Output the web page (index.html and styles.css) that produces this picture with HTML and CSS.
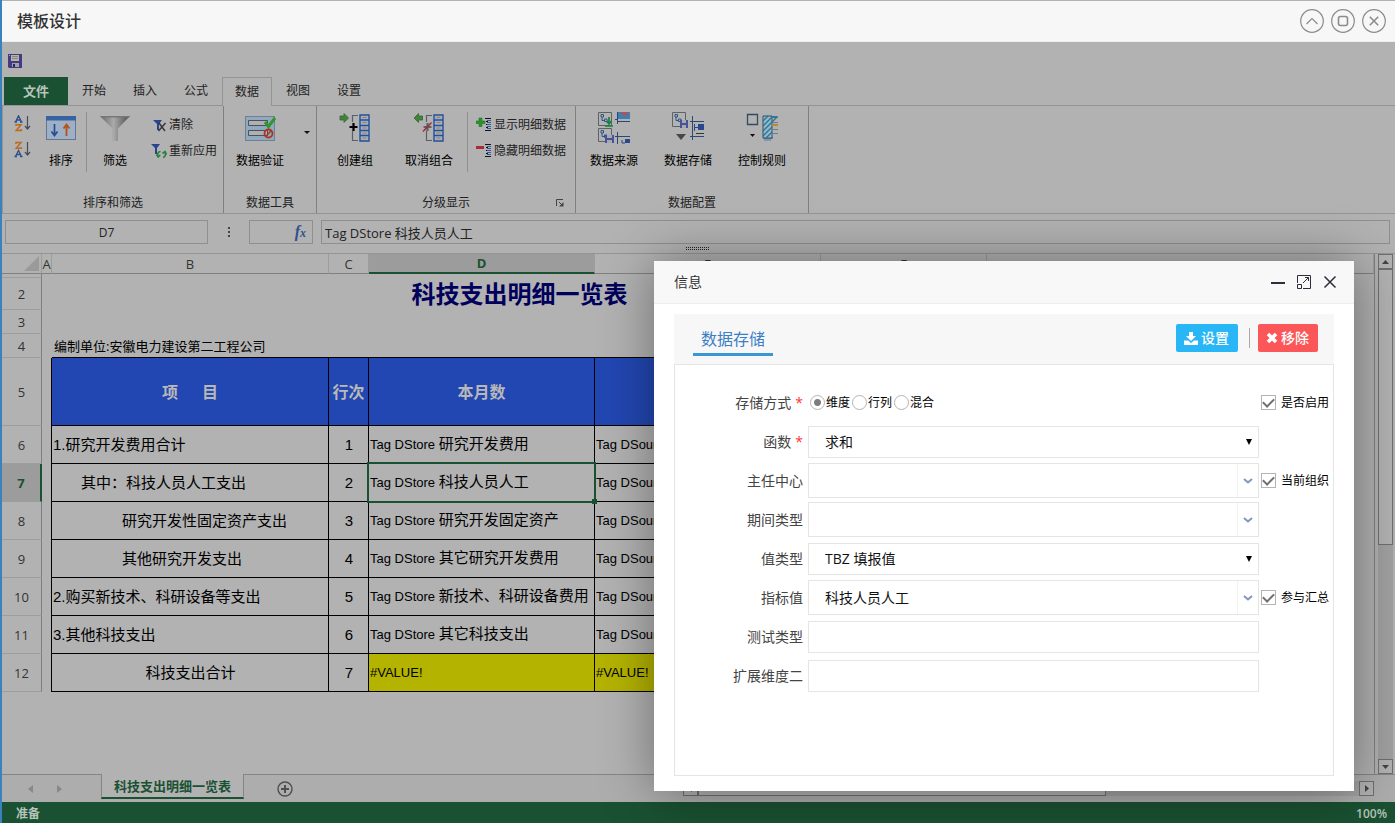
FILE: index.html
```html
<!DOCTYPE html>
<html lang="zh-CN">
<head>
    <meta charset="UTF-8">
    <meta name="viewport" content="width=device-width, initial-scale=1.0">
    <title>模板设计</title>
    <link rel="stylesheet" href="styles.css">
</head>
<body>
    <header class="window-header">
        <h1>模板设计</h1>
        <div class="window-tools">
            <button type="button" aria-label="收起"><svg width="24" height="24" viewBox="0 0 24 24"><circle cx="12" cy="12" r="11.3"/><path d="M6.5 15 12 9.5l5.500 5.500"/></svg></button>
            <button type="button" aria-label="最大化"><svg width="24" height="24" viewBox="0 0 24 24"><circle cx="12" cy="12" r="11.3"/><rect x="7.500" y="7.500" width="9" height="9" rx="2" stroke-width="1.600"/></svg></button>
            <button type="button" aria-label="关闭"><svg width="24" height="24" viewBox="0 0 24 24"><circle cx="12" cy="12" r="11.3"/><path d="m7.800 7.800 8.400 8.400m0-8.400-8.400 8.400" stroke-width="1.600"/></svg></button>
        </div>
    </header>

    <div class="quick-bar">
        <button type="button" aria-label="保存">
            <svg width="14" height="14" viewBox="0 0 14 14"><path d="M0 0h14v14H1l-1-1z" fill="#463a80"/><path d="M1 1h1v1H1z" fill="#aaa"/><path d="M3 1h8v6H3z" fill="#b5b5ad"/><path d="M4 2.500h6M4 4.500h6" stroke="#85857e"/><path d="M4 9h7v4H4z" fill="#9ba4ad"/><path d="M5 10h2v3H5z" fill="#262c4a"/></svg>
        </button>
    </div>

    <nav class="tabs">
        <button type="button" class="tab file">文件</button>
        <button type="button" class="tab">开始</button>
        <button type="button" class="tab">插入</button>
        <button type="button" class="tab">公式</button>
        <button type="button" class="tab active">数据</button>
        <button type="button" class="tab">视图</button>
        <button type="button" class="tab">设置</button>
    </nav>

    <section class="ribbon">
        <div class="group group-sort">
            <div class="group-body">
                <div class="mini-list">
                    <button type="button" aria-label="升序"><svg width="18" height="18" viewBox="0 0 18 18" fill="none"><path d="M2.500 7 5.500.8 8.500 7M3.500 5h4M1.500 7h2.500M7 7h2.500" stroke="#2d4d8e" stroke-width="1.300"/><path d="M3 11V9.700h5L3.200 15.500H8.300V14" stroke="#bd6a1d" stroke-width="1.500"/><path d="M14.500 1v12M12 11l2.500 3 2.500-3" stroke="#444c58" stroke-width="1.200"/></svg></button>
                    <button type="button" aria-label="降序"><svg width="18" height="18" viewBox="0 0 18 18" fill="none"><path d="M3 3V1.500h5L3.200 7.200H8.300V6" stroke="#bd6a1d" stroke-width="1.500"/><path d="m2.500 15.500 3-6 3 6M3.500 13.500h4M1.500 15.500h2.500M7 15.500h2.500" stroke="#2d4d8e" stroke-width="1.300"/><path d="M14.500 1v12M12 11l2.500 3 2.500-3" stroke="#444c58" stroke-width="1.200"/></svg></button>
                </div>
                <button type="button" class="big">
                    <svg width="32" height="32" viewBox="0 0 32 32"><rect x="1.500" y="4.500" width="29" height="23" fill="#9db0c5" stroke="#62768f"/><path d="M1 4h30v4.500H1z" fill="#3963a0"/><path d="M9.500 12v10M6.500 19.500l3 4 3-4" fill="none" stroke="#284b91" stroke-width="1.700"/><path d="M21.500 24V13.500m-3 3 3-4 3 4" fill="none" stroke="#bb521b" stroke-width="1.900"/></svg>
                    <span>排序</span>
                </button>
                <i class="divider"></i>
                <button type="button" class="big">
                    <svg width="32" height="32" viewBox="0 0 32 32"><defs><linearGradient id="cone"><stop offset="0" stop-color="#666"/><stop offset=".45" stop-color="#aaa"/><stop offset="1" stop-color="#4c4c4c"/></linearGradient></defs><path d="M1 4h30L19 16.500V29h-5.500V16.500z" fill="url(#cone)"/><path d="M1 4h30l-1 1.500H2.500z" fill="#777"/></svg>
                    <span>筛选</span>
                </button>
                <div class="small-list">
                    <button type="button" class="small"><svg width="16" height="16" viewBox="0 0 16 16"><path d="M2 3h9L8 7v6H6V7z" fill="#27458d"/><path d="m8 6 6 8m.5-8L7.500 14" stroke="#353535" stroke-width="1.400"/></svg>清除</button>
                    <button type="button" class="small"><svg width="16" height="16" viewBox="0 0 16 16"><path d="M0 1h9L6 5v6H4V5z" fill="#27458d"/><path d="M9.500 8.500A3 3 0 0 0 7 13M5.500 11.500l1.700 2.500 2-2M12 14.500A3 3 0 0 0 14 10M11.500 10.500 14 8.500l1.500 3" fill="none" stroke="#28833a" stroke-width="1.700"/></svg>重新应用</button>
                </div>
            </div>
            <div class="group-title">排序和筛选</div>
        </div>

        <div class="group group-tools">
            <div class="group-body">
                <button type="button" class="big">
                    <svg width="32" height="32" viewBox="0 0 32 32"><rect x="1.500" y="4.500" width="29" height="24" fill="#91a8bd" stroke="#6c8194"/><path d="M4.500 8.500h19v5h-19zM4.500 18.500h19v5h-19z" fill="#adb1b5" stroke="#4a5158"/><path d="m21 10 3.500 4.500L31 6" fill="none" stroke="#2f982c" stroke-width="3"/><circle cx="24.500" cy="21.500" r="4" fill="none" stroke="#a83520" stroke-width="1.800"/><path d="m22 24 5-5" stroke="#a83520" stroke-width="1.500"/></svg>
                    <span>数据验证</span>
                </button>
                <i class="caret"></i>
            </div>
            <div class="group-title">数据工具</div>
        </div>

        <div class="group group-outline">
            <div class="group-body">
                <div class="big-list">
                    <button type="button" class="big">
                        <svg width="32" height="32" viewBox="0 0 32 32"><path d="M1 4h4V1.500L9.500 6 5 10.500V8H1z" fill="#43843b" stroke="#386532" stroke-width=".8"/><path d="M19 3.500h-5.500V10M13.500 19v9.500H19" fill="none" stroke="#59606a" stroke-width="1.200"/><path d="M14.500 11v8M10.500 15h8" stroke="#000" stroke-width="2.200"/><path d="M21 3h9v26h-9z" fill="#9eb0c7" stroke="#284f96" stroke-width="1.400"/><path d="M21 8h9M21 13.500h9M21 18.500h9M21 23.500h9" stroke="#284f96" stroke-width="1.300"/><path d="M23.500 5.500h4M23.500 10.500h4M23.500 16h4M23.500 21h4M23.500 26h4" stroke="#b87a31"/></svg>
                        <span>创建组</span>
                    </button>
                    <button type="button" class="big">
                        <svg width="32" height="32" viewBox="0 0 32 32"><path d="M9.500 4H5.500V1.500L1 6l4.500 4.500V8h4z" fill="#43843b" stroke="#386532" stroke-width=".8"/><path d="M19 3.500h-5.500V10M13.500 19v9.500H19" fill="none" stroke="#59606a" stroke-width="1.200"/><path d="M14.500 11v8M10.500 15h8" stroke="#5f6266" stroke-width="2.200"/><path d="m10 19.500 8.500-9" stroke="#a72632" stroke-width="1.400"/><path d="M21 3h9v26h-9z" fill="#9eb0c7" stroke="#284f96" stroke-width="1.400"/><path d="M21 8h9M21 13.500h9M21 18.500h9M21 23.500h9" stroke="#284f96" stroke-width="1.300"/><path d="M23.500 5.500h4M23.500 10.500h4M23.500 16h4M23.500 21h4M23.500 26h4" stroke="#b87a31"/></svg>
                        <span>取消组合</span>
                    </button>
                </div>
                <i class="divider"></i>
                <div class="small-list">
                    <button type="button" class="small"><svg width="16" height="16" viewBox="0 0 16 16"><path d="M3 1h3v3h3v2.500H6v3H3v-3H0V4h3z" fill="#29942b" stroke="#23721e" stroke-width=".6"/><path d="M9 1.500h6M9 13.500h6M10 4.500h2M10 7.500h2M10 10.500h2" stroke="#111"/><path d="M11 3.500h4M11 5.500h4M11 7.500h4M11 9.500h4M11 11.500h4" stroke="#3458a2"/></svg>显示明细数据</button>
                    <button type="button" class="small"><svg width="16" height="16" viewBox="0 0 16 16"><path d="M0 3h8v3H0z" fill="#a52d35"/><path d="M9 1.500h6M9 13.500h6M10 4.500h2M10 7.500h2M10 10.500h2" stroke="#111"/><path d="M11 3.500h4M11 5.500h4M11 7.500h4M11 9.500h4M11 11.500h4" stroke="#3458a2"/></svg>隐藏明细数据</button>
                </div>
            </div>
            <div class="group-title">分级显示
                <button type="button" class="launcher" aria-label="更多"><svg width="8" height="8" viewBox="0 0 8 8"><path d="M.5 7V.5H7M3 3l3 3" fill="none" stroke="#444"/><path d="M7.500 3v4.500H3z" fill="#444"/></svg></button>
            </div>
        </div>

        <div class="group group-config">
            <div class="group-body">
                <div class="big-list">
                    <button type="button" class="big">
                        <svg width="32" height="32" viewBox="0 0 32 32" fill="none"><path d="M.5.500h13v13H.5zM.5 16.500h13v13H.5z" stroke="#5d6267"/><path d="M3 2.500h2.500V5H3zM6.500 7H9v2.500H6.500zM4 5v3.500h2.500M3 18.500h2.500V21H3zM6.500 23H9v2.500H6.500zM4 21v3.500h2.500" stroke="#2b5786"/><path d="M11 5v6M8.500 9l2.500 3 2.500-3M7 14h8" stroke="#15803b" stroke-width="1.700"/><path d="M7 23h9v8H7z" fill="#4a5296"/><path d="M9 23h5v3H9zM9 28h5v3H9z" fill="#a4a9b3"/><path d="M19.500 0v12M17 7.500h3M20 9.500h12" stroke="#2c4775"/><path d="M20 0h12v7H20z" fill="#437cad"/><path d="m22 0 5 4 4-4z" fill="#b25157"/><path d="M19.500 20v12M17 24.500h15M24 28v3h3" stroke="#2c4775"/><path d="M27 27h5v4h-5z" fill="#284791"/></svg>
                        <span>数据来源</span>
                    </button>
                    <button type="button" class="big">
                        <svg width="32" height="32" viewBox="0 0 32 32" fill="none"><path d="M.5.500h13v14H.5z" stroke="#5d6267"/><path d="M3 2.500h2.500V5H3zM6.500 7H9v2.500H6.500zM4 5v3.500h2.500" stroke="#2b5786"/><path d="M8 8h8v8H8z" fill="#4a5296"/><path d="M10 8h4v3h-4zM10 13h4v3h-4z" fill="#a4a9b3"/><path d="M4 22h10l-5 6z" fill="#484848"/><path d="M20.500 4v24M18 9.500h14M18 24.500h14M22 15.500h5M22.500 12v7" stroke="#2c4775"/><path d="M26 12h6v6h-6z" fill="#284791"/><path d="M24 21.500h8" stroke="#333"/></svg>
                        <span>数据存储</span>
                    </button>
                    <button type="button" class="big">
                        <svg width="32" height="32" viewBox="0 0 32 32" fill="none"><path d="M1.500 2.500h10v10h-10z" stroke="#334a61" stroke-width="1.300"/><path d="M4 22h5l-2.500 3z" fill="#111"/><path d="M17 5h15M17 26h10" stroke="#315069"/><path d="M17 4h9v22h-9z" fill="#9bb7c3" stroke="#315069"/><path d="m17 9 5-5m-5 10 9-9m-9 14 9-9m-9 14 9-9m-6 11 6-6M26 5h5m-5 5 5-5" stroke="#21779d" stroke-width="1.300"/><path d="M26 10.500h6M26 17.500h6M26 21.500h6" stroke="#6c7b91"/><path d="M26 13h6" stroke="#bd8730" stroke-width="2"/><path d="M18 27h7v2h-7z" fill="#8198b0"/></svg>
                        <span>控制规则</span>
                    </button>
                </div>
            </div>
            <div class="group-title">数据配置</div>
        </div>
    </section>

    <section class="formula">
        <div class="formula-row">
            <input type="text" class="name-box" aria-label="名称框" value="D7">
            <span class="dots"><i></i><i></i><i></i></span>
            <button type="button" class="fx" aria-label="插入函数"><em>f<small>x</small></em></button>
            <input type="text" class="formula-box" aria-label="编辑栏" value="Tag DStore 科技人员人工">
        </div>
        <div class="grip"><i></i><i></i></div>
    </section>

    <main class="sheet">
        <div class="grid">
            <table>
                <colgroup>
                    <col class="col-head"><col class="col-a"><col class="col-b"><col class="col-c"><col class="col-d"><col class="col-d"><col class="col-f"><col>
                </colgroup>
                <thead>
                    <tr>
                        <th class="corner"><svg width="15" height="15" viewBox="0 0 15 15"><path d="M15 0v15H0z" fill="#9a9a9a"/></svg></th>
                        <th>A</th><th>B</th><th>C</th><th class="current">D</th><th>E</th><th>F</th><th></th>
                    </tr>
                </thead>
                <tbody>
                    <tr class="row-1"><th></th><td colspan="7"></td></tr>
                    <tr class="row-2"><th>2</th><td></td><td colspan="5" class="title">科技支出明细一览表</td><td></td></tr>
                    <tr class="row-3"><th>3</th><td colspan="7"></td></tr>
                    <tr class="row-3 row-unit"><th>4</th><td></td><td class="unit">编制单位:安徽电力建设第二工程公司</td><td></td><td></td><td></td><td></td><td></td></tr>
                    <tr class="row-5"><th>5</th><td class="edge"></td><td>项&emsp;&ensp;目</td><td>行次</td><td>本月数</td><td></td><td></td><td class="out"></td></tr>
                    <tr class="data"><th>6</th><td class="edge"></td><td>1.研究开发费用合计</td><td>1</td><td><span>Tag DStore </span>研究开发费用</td><td><span>Tag DSource</span></td><td></td><td class="out"></td></tr>
                    <tr class="data"><th class="current">7</th><td class="edge"></td><td class="in-1">其中：科技人员人工支出</td><td>2</td><td class="selected"><span>Tag DStore </span>科技人员人工</td><td><span>Tag DSource</span></td><td></td><td class="out"></td></tr>
                    <tr class="data"><th>8</th><td class="edge"></td><td class="in-2">研究开发性固定资产支出</td><td>3</td><td><span>Tag DStore </span>研究开发固定资产</td><td><span>Tag DSource</span></td><td></td><td class="out"></td></tr>
                    <tr class="data"><th>9</th><td class="edge"></td><td class="in-2">其他研究开发支出</td><td>4</td><td><span>Tag DStore </span>其它研究开发费用</td><td><span>Tag DSource</span></td><td></td><td class="out"></td></tr>
                    <tr class="data"><th>10</th><td class="edge"></td><td>2.购买新技术、科研设备等支出</td><td>5</td><td><span>Tag DStore </span>新技术、科研设备费用</td><td><span>Tag DSource</span></td><td></td><td class="out"></td></tr>
                    <tr class="data"><th>11</th><td class="edge"></td><td>3.其他科技支出</td><td>6</td><td><span>Tag DStore </span>其它科技支出</td><td><span>Tag DSource</span></td><td></td><td class="out"></td></tr>
                    <tr class="data total"><th>12</th><td class="edge"></td><td>科技支出合计</td><td>7</td><td class="sum"><span>#VALUE!</span></td><td class="sum"><span>#VALUE!</span></td><td></td><td class="out"></td></tr>
                </tbody>
            </table>
        </div>
        <div class="vscroll">
            <button type="button" aria-label="向上"><svg width="7" height="4" viewBox="0 0 7 4"><path d="M0 4 3.500 0 7 4z"/></svg></button>
            <div class="vthumb"></div>
            <button type="button" aria-label="向下"><svg width="7" height="4" viewBox="0 0 7 4"><path d="m0 0 3.500 4L7 0z"/></svg></button>
        </div>
    </main>

    <div class="sheet-bar">
        <div class="sheet-nav">
            <button type="button" aria-label="上一个"><svg width="5" height="8" viewBox="0 0 5 8"><path d="M5 0v8L0 4z"/></svg></button>
            <button type="button" aria-label="下一个"><svg width="5" height="8" viewBox="0 0 5 8"><path d="M0 0v8l5-4z"/></svg></button>
        </div>
        <button type="button" class="sheet-tab">科技支出明细一览表</button>
        <div class="sheet-rest">
            <button type="button" class="add" aria-label="新建"><svg width="16" height="16" viewBox="0 0 16 16" fill="none" stroke="#4f4f4f"><circle cx="8" cy="8" r="7" stroke-width="1.400"/><path d="M8 4v8M4 8h8" stroke-width="2"/></svg></button>
            <div class="hscroll">
                <button type="button" aria-label="向左"><svg width="4" height="7" viewBox="0 0 4 7"><path d="M4 0v7L0 3.500z"/></svg></button>
                <div class="hthumb"></div>
                <button type="button" aria-label="向右"><svg width="4" height="7" viewBox="0 0 4 7"><path d="M0 0v7l4-3.500z"/></svg></button>
            </div>
        </div>
    </div>

    <footer class="status"><span>准备</span><span>100%</span></footer>

    <section class="dialog" role="dialog" aria-labelledby="dialogTitle">
        <div class="dialog-header">
            <h2 id="dialogTitle">信息</h2>
            <div class="dialog-tools">
                <button type="button" aria-label="最小化"><svg width="14" height="14" viewBox="0 0 14 14"><path d="M0 7h14v2H0z" fill="#2e2d3c"/></svg></button>
                <button type="button" aria-label="放大"><svg width="14" height="14" viewBox="0 0 14 14" fill="none" stroke="#2e2d3c"><path d="M.5 8V.5h13v13H6M.5 9.500h4v4h-4zM6 8l5.500-5.500M8 2.500h3.500V6"/></svg></button>
                <button type="button" aria-label="关闭"><svg width="14" height="14" viewBox="0 0 14 14" fill="none" stroke="#2e2d3c" stroke-width="1.500"><path d="m1.500 1.500 11 11m0-11-11 11"/></svg></button>
            </div>
        </div>
        <div class="panel">
            <div class="panel-header">
                <h3>数据存储</h3>
                <div class="actions">
                    <button type="button" class="btn btn-set"><svg width="14" height="13" viewBox="0 0 14 13" fill="#fff"><path d="M5 0h4v4h3L7 9 2 4h3z"/><path d="M0 8.500h4L7 11l3-2.500h4V13H0z"/></svg>设置</button>
                    <i></i>
                    <button type="button" class="btn btn-remove"><svg width="12" height="12" viewBox="0 0 12 12"><path d="m2 2 8 8m0-8-8 8" stroke="#fff" stroke-width="3.600"/></svg>移除</button>
                </div>
            </div>
            <form class="panel-body">
                <div class="form-row">
                    <span class="caption required" id="modeCaption">存储方式</span>
                    <div class="radios" role="radiogroup" aria-labelledby="modeCaption">
                        <label><input type="radio" name="mode" checked>维度</label>
                        <label><input type="radio" name="mode">行列</label>
                        <label><input type="radio" name="mode">混合</label>
                    </div>
                    <label class="check"><input type="checkbox" checked>是否启用</label>
                </div>
                <div class="form-row">
                    <label class="caption required" for="func">函数</label>
                    <div class="select"><select id="func"><option>求和</option></select></div>
                </div>
                <div class="form-row">
                    <label class="caption" for="center">主任中心</label>
                    <div class="combo"><input type="text" id="center"><button type="button" aria-label="展开"><svg width="10" height="6" viewBox="0 0 10 6"><path d="m1 1 4 3.500L9 1"/></svg></button></div>
                    <label class="check"><input type="checkbox" checked>当前组织</label>
                </div>
                <div class="form-row">
                    <label class="caption" for="period">期间类型</label>
                    <div class="combo"><input type="text" id="period"><button type="button" aria-label="展开"><svg width="10" height="6" viewBox="0 0 10 6"><path d="m1 1 4 3.500L9 1"/></svg></button></div>
                </div>
                <div class="form-row">
                    <label class="caption" for="valueType">值类型</label>
                    <div class="select"><select id="valueType"><option>TBZ 填报值</option></select></div>
                </div>
                <div class="form-row">
                    <label class="caption" for="indicator">指标值</label>
                    <div class="combo"><input type="text" id="indicator" value="科技人员人工"><button type="button" aria-label="展开"><svg width="10" height="6" viewBox="0 0 10 6"><path d="m1 1 4 3.500L9 1"/></svg></button></div>
                    <label class="check"><input type="checkbox" checked>参与汇总</label>
                </div>
                <div class="form-row">
                    <label class="caption" for="testType">测试类型</label>
                    <input type="text" class="field" id="testType">
                </div>
                <div class="form-row">
                    <label class="caption" for="extra">扩展维度二</label>
                    <input type="text" class="field" id="extra">
                </div>
            </form>
        </div>
    </section>
</body>
</html>
```
FILE: styles.css
```css
* {
    box-sizing: border-box;
}
body {
    font-family: "Open Sans", "Noto Sans CJK SC", sans-serif;
    font-size: 12px;
    line-height: 16px;
    color: #222;
    background-color: #b2b2b2;
    margin: 0;
    height: 100vh;
    display: flex;
    flex-direction: column;
    overflow: hidden;
    border-left: 2px solid #3a82bd;
    position: relative;
}
button {
    font: inherit;
    color: inherit;
    background: none;
    border: 0;
    padding: 0;
    cursor: pointer;
}
input, select {
    font: inherit;
    color: inherit;
    margin: 0;
    outline: none;
}
svg {
    display: block;
    flex: none;
}
h1, h2, h3 {
    margin: 0;
    font-weight: 400;
}

/* window title */
.window-header {
    flex: none;
    height: 42px;
    background-color: #f7f7f7;
    border-top: 1px solid #b2b2b2;
    border-bottom: 1px solid #eee;
    display: flex;
    align-items: center;
    justify-content: space-between;
    padding: 0 9px 0 15px;
}
.window-header h1 {
    font-size: 16px;
    font-weight: 500;
    color: #333;
}
.window-tools {
    display: flex;
    gap: 7px;
}
.window-tools svg {
    fill: none;
    stroke: #8c8c8c;
    stroke-width: 1.2;
}

/* ribbon */
.quick-bar {
    flex: none;
    height: 35px;
    padding: 12px 6px 0;
}
.tabs {
    flex: none;
    height: 29px;
    display: flex;
    gap: 1px;
    padding-left: 2px;
    border-bottom: 1px solid #949494;
}
.tab {
    width: 50px;
    height: 28px;
}
.tab.file {
    width: 64px;
    background-color: #1a5132;
    color: #b8c4bc;
    font-size: 13px;
    font-weight: 700;
}
.tab.active {
    height: 29px;
    border: 1px solid #949494;
    border-bottom: 0;
    background-color: #b2b2b2;
}
.ribbon {
    flex: none;
    display: flex;
    height: 108px;
    border-left: 1px solid #949494;
    border-bottom: 1px solid #949494;
}
.group {
    display: flex;
    flex-direction: column;
    border-right: 1px solid #808080;
}
.group-sort {
    width: 221px;
}
.group-tools {
    width: 93px;
}
.group-outline {
    width: 259px;
}
.group-config {
    width: 233px;
}
.group-body {
    flex: 1;
    display: flex;
    align-items: flex-start;
    padding: 6px 0 0 14px;
}
.group-sort .group-body {
    padding-left: 10px;
}
.group-tools .group-body {
    padding-left: 12px;
}
.group-title {
    display: flex;
    align-items: center;
    justify-content: center;
    height: 20px;
    position: relative;
}
.launcher {
    position: absolute;
    right: 11px;
    top: 6px;
}
.big {
    width: 48px;
    display: flex;
    flex-direction: column;
    align-items: center;
    gap: 9px;
    white-space: nowrap;
    color: #000;
}
.big-list {
    display: flex;
    gap: 26px;
}
.mini-list {
    width: 24px;
    padding-top: 3px;
    display: flex;
    flex-direction: column;
    gap: 8px;
}
.divider {
    width: 1px;
    height: 60px;
    background-color: #8f8f8f;
    margin: 0 4px 0 1px;
}
.group-outline .divider {
    margin: 0 8px 0 14px;
}
.small-list {
    display: flex;
    flex-direction: column;
    gap: 10px;
    padding-top: 5px;
}
.group-sort .small-list {
    margin-left: 12px;
}
.small {
    display: flex;
    align-items: center;
    gap: 2px;
    white-space: nowrap;
}
.caret {
    border: 3px solid transparent;
    border-top: 3px solid #111;
    border-bottom: 0;
    margin: 19px 0 0 20px;
}

/* formula bar */
.formula {
    flex: none;
    height: 40px;
    padding: 6px 5px 0 3px;
    border-bottom: 1px solid #949494;
}
.formula-row {
    display: flex;
}
.name-box, .fx, .formula-box {
    height: 24px;
    border: 1px solid #8f8f8f;
    background-color: #b2b2b2;
}
.name-box {
    width: 203px;
    text-align: center;
}
.dots {
    width: 41px;
    display: flex;
    flex-direction: column;
    align-items: center;
    justify-content: center;
    gap: 2px;
}
.dots i {
    width: 2px;
    height: 2px;
    background-color: #444;
}
.fx {
    width: 64px;
    padding-right: 6px;
    text-align: right;
    font-family: "Liberation Serif", serif;
    font-size: 16px;
    font-weight: 700;
    color: #304f8d;
}
.fx small {
    font-size: 12px;
}
.formula-box {
    flex: 1;
    margin-left: 8px;
    padding: 0 3px;
    font-size: 13px;
}
.grip {
    width: 23px;
    margin: 3px auto 0;
    display: flex;
    flex-direction: column;
    gap: 1px;
}
.grip i {
    height: 1px;
    background: repeating-linear-gradient(90deg, #222 0 1px, transparent 1px 2px);
}

/* sheet */
.sheet {
    flex: 1;
    min-height: 0;
    display: flex;
}
.grid {
    flex: 1;
    min-width: 0;
    overflow: hidden;
    border-right: 1px solid #808080;
}
.grid table {
    table-layout: fixed;
    width: 100%;
    border-spacing: 0;
}
.col-head, .col-c {
    width: 40px;
}
.col-a {
    width: 10px;
}
.col-b {
    width: 277px;
}
.col-d {
    width: 226px;
}
.col-f {
    width: 166px;
}
.grid th, .grid td {
    padding: 0;
    white-space: nowrap;
}
.grid th {
    font-size: 13px;
    font-weight: 400;
    color: #333;
    border-right: 1px solid #7f7f7f;
    border-bottom: 1px solid #98a098;
}
.grid thead th {
    height: 20px;
    border-right-color: #98a098;
    border-bottom-color: #808080;
}
.grid thead th.current {
    background-color: #9c9c9c;
    color: #1a5132;
    font-weight: 700;
    border-bottom: 2px solid #1a5132;
}
.grid tbody th.current {
    background-color: #9c9c9c;
    color: #1a5132;
    font-weight: 700;
    border-right: 2px solid #1a5132;
}
.corner svg {
    margin-left: 22px;
}
.row-1 {
    height: 4px;
}
.row-2 {
    height: 32px;
}
.row-3 {
    height: 24px;
}
.row-5 {
    height: 68px;
}
.grid td.title {
    text-align: center;
    font-size: 24px;
    line-height: 30px;
    font-weight: 700;
    color: #00005c;
}
.grid td.unit {
    padding-left: 2px;
    font-size: 13px;
    color: #000;
}
.row-unit td + td:not(:last-child) {
    border-bottom: 1px solid #000;
}
.row-5 td {
    background-color: #2247b2;
    color: #b8b8b8;
    font-size: 16px;
    font-weight: 700;
    text-align: center;
    border-right: 1px solid #000;
    border-bottom: 1px solid #000;
}
.data td {
    height: 38px;
    padding-left: 1px;
    font-family: "Liberation Sans", "Noto Sans CJK SC", sans-serif;
    font-size: 15px;
    line-height: 20px;
    color: #000;
    border-right: 1px solid #000;
    border-bottom: 1px solid #000;
}
.data td span {
    font-size: 13px;
}
.grid td.edge, .grid td.out {
    background: none;
    border-bottom: 0;
}
.grid td.out {
    border-right: 0;
}
.data td:nth-child(4), .total td:nth-child(3) {
    text-align: center;
}
.data td.in-1 {
    padding-left: 29px;
}
.data td.in-2 {
    padding-left: 70px;
}
.data td.sum {
    background-color: #b4b300;
}
.data td.selected {
    position: relative;
}
.selected::before {
    content: "";
    position: absolute;
    inset: -2px;
    border: 2px solid #1a5132;
}
.selected::after {
    content: "";
    position: absolute;
    right: -3px;
    bottom: -3px;
    width: 5px;
    height: 5px;
    background-color: #1a5132;
}
.vscroll {
    width: 20px;
    padding: 0 2px 0 3px;
    display: flex;
    flex-direction: column;
    background: linear-gradient(#a1a1a1, #a1a1a1) content-box;
}
.vscroll button, .hscroll button {
    flex: none;
    width: 15px;
    height: 15px;
    border: 1px solid #6f6f6f;
    background-color: #b2b2b2;
    display: flex;
    align-items: center;
    justify-content: center;
    fill: #444;
}
.vthumb, .hthumb {
    border: 1px solid #6f6f6f;
    background-color: #b2b2b2;
}
.vthumb {
    height: 53%;
    margin-bottom: auto;
}

/* sheet tabs */
.sheet-bar {
    flex: none;
    height: 28px;
    display: flex;
    align-items: flex-start;
    background-color: #adadad;
}
.sheet-nav, .sheet-rest {
    height: 28px;
    border-top: 1px solid #858585;
    display: flex;
    align-items: center;
}
.sheet-nav {
    width: 99px;
    gap: 24px;
    padding-left: 26px;
    fill: #888;
}
.sheet-tab {
    height: 25px;
    padding: 0 12px;
    border: 1px solid #858585;
    border-top: 0;
    border-bottom: 2px solid #1a5132;
    background-color: #b2b2b2;
    color: #1a5132;
    font-size: 13px;
    font-weight: 700;
    white-space: nowrap;
}
.sheet-rest {
    flex: 1;
    justify-content: space-between;
    padding: 0 21px 0 33px;
}
.hscroll {
    width: 63%;
    height: 15px;
    display: flex;
    background-color: #a1a1a1;
}
.hthumb {
    width: 59%;
    margin-right: auto;
}
.status {
    flex: none;
    height: 21px;
    background-color: #1a5132;
    color: #b8c4bc;
    font-weight: 600;
    display: flex;
    align-items: center;
    justify-content: space-between;
    padding: 2px 8px 0 14px;
}

/* dialog */
.dialog {
    position: absolute;
    top: 261px;
    right: 41px;
    width: 700px;
    height: 530px;
    display: flex;
    flex-direction: column;
    background-color: #fff;
    box-shadow: 1px 1px 50px rgba(0, 0, 0, 0.4);
}
.dialog-header {
    flex: none;
    height: 43px;
    padding: 0 17px 0 20px;
    background-color: #f8f8f8;
    border-bottom: 1px solid #eee;
    display: flex;
    align-items: center;
    justify-content: space-between;
}
.dialog-header h2 {
    font-size: 14px;
    color: #333;
}
.dialog-tools {
    display: flex;
    gap: 12px;
}
.panel {
    flex: 1;
    padding: 10px 20px 15px;
    display: flex;
    flex-direction: column;
}
.panel-header {
    height: 50px;
    padding: 0 16px 0 19px;
    background-color: #f7f7f7;
    display: flex;
    align-items: center;
    justify-content: space-between;
}
.panel-header h3 {
    font-size: 16px;
    line-height: 28px;
    padding: 2px 8px 0;
    color: #3a7fc6;
    border-bottom: 3px solid #3c96d5;
}
.actions {
    display: flex;
    align-items: center;
    padding-bottom: 2px;
}
.actions i {
    width: 1px;
    height: 20px;
    margin: 0 8px 0 11px;
    background-color: #aaa;
}
.btn {
    height: 28px;
    padding: 0 9px 0 8px;
    border-radius: 2px;
    color: #fff;
    font-size: 14px;
    font-weight: 500;
    display: flex;
    align-items: center;
    gap: 3px;
}
.btn-set {
    background-color: #29b6f6;
}
.btn-remove {
    background-color: #fb5658;
}
.panel-body {
    flex: 1;
    padding-top: 18px;
    border: 1px solid #e5e5e5;
}
.form-row {
    display: grid;
    grid-template-columns: 128px 1fr 72px;
    align-items: center;
    height: 39px;
}
.caption {
    text-align: right;
    font-size: 14px;
    color: #444;
}
.caption.required::after {
    content: "*";
    color: #f33;
    margin-left: 4px;
}
.select, .combo, .field, .radios {
    margin: 0 2px 0 5px;
    font-size: 14px;
    color: #111;
}
.select, .field {
    height: 32px;
    border: 1px solid #e5e5e5;
}
.field {
    padding: 0 16px;
}
.select {
    position: relative;
}
.select select {
    appearance: none;
    width: 100%;
    height: 30px;
    padding: 0 16px;
    border: 0;
    background: none;
}
.select::after {
    content: "";
    position: absolute;
    right: 6px;
    top: 12px;
    border: 3px solid transparent;
    border-top: 6px solid #000;
    border-bottom: 0;
    pointer-events: none;
}
.combo {
    height: 35px;
    border: 1px solid #e5e5e5;
    display: flex;
}
.combo input {
    flex: 1;
    min-width: 0;
    padding: 0 16px;
    border: 0;
    border-right: 1px solid #f2f2f2;
}
.combo button {
    width: 20px;
    display: flex;
    align-items: center;
    justify-content: center;
}
.combo path {
    fill: none;
    stroke: #8196c0;
    stroke-width: 2;
}
.radios {
    display: flex;
    gap: 2px;
    padding-left: 2px;
    font-size: 12px;
}
.radios label, .check {
    display: flex;
    align-items: center;
    gap: 1px;
    color: #000;
    white-space: nowrap;
}
.radios input, .check input {
    appearance: none;
    flex: none;
    width: 15px;
    height: 15px;
    border: 1px solid #b4b4b4;
    background-color: #fff;
}
.radios input {
    border-radius: 50%;
}
.radios input:checked {
    background: radial-gradient(circle, #7c7c7c 3px, transparent 4px);
}
.check {
    gap: 5px;
}
.check input {
    display: flex;
    align-items: center;
    justify-content: center;
}
.check input:checked::before {
    content: "";
    width: 9px;
    height: 5px;
    border-left: 2px solid #707070;
    border-bottom: 2px solid #707070;
    transform: translateY(-1px) rotate(-45deg);
}
```
